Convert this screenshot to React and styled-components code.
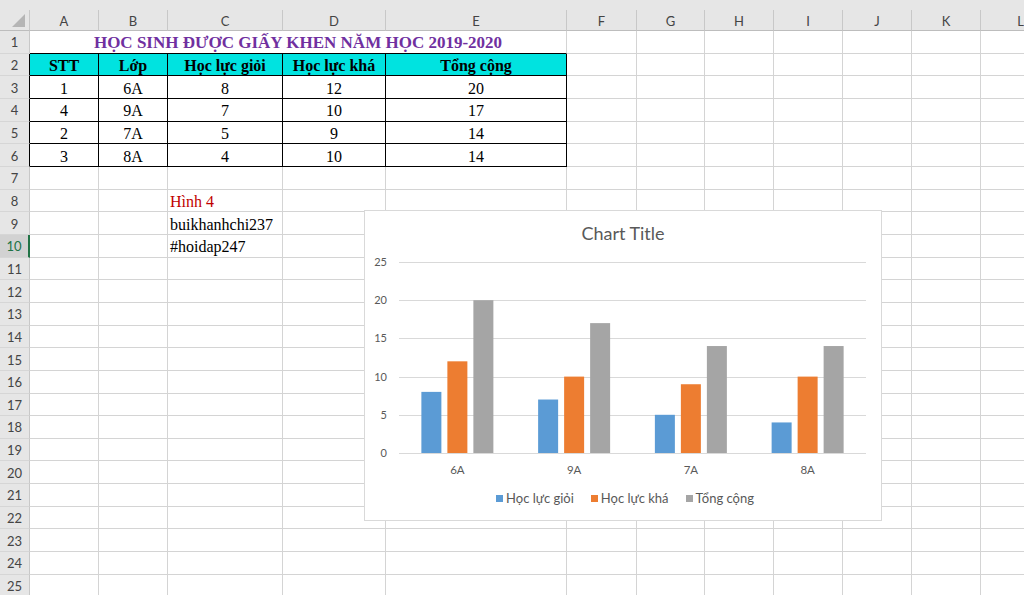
import React from "react";
import styled, { createGlobalStyle } from "styled-components";

const Global = createGlobalStyle`
  html, body { margin: 0; padding: 0; background: #fff; }
  body { width: 1024px; height: 595px; overflow: hidden; }
`;

const COLS = [
  { k: "A", w: 69 }, { k: "B", w: 69 }, { k: "C", w: 115 }, { k: "D", w: 103 },
  { k: "E", w: 181 }, { k: "F", w: 70 }, { k: "G", w: 68 }, { k: "H", w: 69 },
  { k: "I", w: 69 }, { k: "J", w: 69 }, { k: "K", w: 69 }, { k: "L", w: 80 },
];

const GRID = "#d4d4d4";
const HEAD_BG = "#e6e6e6";

const Page = styled.div`
  position: relative;
  width: 1024px;
  height: 595px;
  overflow: hidden;
  background: #fff;
`;

const TopBand = styled.div`
  height: 10px;
  background: ${HEAD_BG};
`;

const Sheet = styled.div`
  display: grid;
  grid-template-columns: 30px ${COLS.map((c) => c.w + "px").join(" ")};
  grid-template-rows: 21px;
  grid-auto-rows: 22.667px;
`;

const Corner = styled.div`
  background: ${HEAD_BG};
  border-right: 1px solid #c8c8c8;
  border-bottom: 1px solid #bdbdbd;
  box-sizing: border-box;
  display: flex;
  align-items: flex-end;
  justify-content: flex-end;
  padding: 0 4px 3px 0;
`;

const ColHead = styled.div`
  background: ${HEAD_BG};
  border-right: 1px solid #c8c8c8;
  border-bottom: 1px solid #bdbdbd;
  box-sizing: border-box;
  display: flex;
  align-items: center;
  justify-content: center;
  padding-top: 1px;
  font-family: Lato, "Liberation Sans", sans-serif;
  font-size: 13px;
  color: #444;
`;

const RowHead = styled.div`
  background: ${(p) => (p.$selected ? "#d2d2d2" : HEAD_BG)};
  border-right: ${(p) =>
    p.$selected ? "2px solid #217346" : p.$edge ? "1px solid #000" : "1px solid #c8c8c8"};
  border-bottom: 1px solid #d6d6d6;
  box-sizing: border-box;
  display: flex;
  align-items: center;
  justify-content: center;
  padding-top: 1px;
  font-family: Lato, "Liberation Sans", sans-serif;
  font-size: 13px;
  color: ${(p) => (p.$selected ? "#217346" : "#444")};
`;

const Cell = styled.div`
  grid-column: span ${(p) => p.$span || 1};
  box-sizing: border-box;
  border-right: 1px solid ${(p) => (p.$boxR ? "#000" : GRID)};
  border-bottom: 1px solid ${(p) => (p.$boxB ? "#000" : GRID)};
  background: ${(p) => p.$bg || "#fff"};
  display: flex;
  align-items: center;
  justify-content: ${(p) => (p.$left ? "flex-start" : "center")};
  padding-left: ${(p) => (p.$left ? "2px" : "0")};
  padding-top: 3px;
  white-space: nowrap;
  overflow: visible;
  font-family: "Liberation Serif", "Times New Roman", serif;
  font-size: ${(p) => (p.$title ? "17px" : "16px")};
  font-weight: ${(p) => (p.$bold ? 700 : 400)};
  color: ${(p) => p.$color || "#000"};
  position: relative;
  z-index: ${(p) => (p.$left ? 1 : 0)};
`;

const ChartBox = styled.div`
  position: absolute;
  left: 364px;
  top: 210px;
  width: 518px;
  height: 311px;
  box-sizing: border-box;
  background: #fff;
  border: 1px solid #d9d9d9;
  display: flex;
  flex-direction: column;
  align-items: center;
  z-index: 5;
`;

const ChartTitle = styled.div`
  margin-top: 10px;
  height: 24px;
  line-height: 24px;
  font-family: Lato, "Open Sans", sans-serif;
  font-size: 18px;
  color: #595959;
`;

const Plot = styled.svg`
  display: block;
  margin-left: -2px;
`;

const Legend = styled.div`
  margin-top: 10px;
  display: flex;
  gap: 17px;
  align-items: center;
  padding-left: 4px;
  font-family: Lato, "Open Sans", sans-serif;
  font-size: 13px;
  color: #595959;
  line-height: 16px;
`;

const LegendItem = styled.div`
  display: flex;
  align-items: center;
  gap: 3px;
`;

const Swatch = styled.span`
  width: 7px;
  height: 7px;
  background: ${(p) => p.$c};
  display: inline-block;
`;

const SERIES = [
  { name: "Học lực giỏi", color: "#5b9bd5" },
  { name: "Học lực khá", color: "#ed7d31" },
  { name: "Tổng cộng", color: "#a5a5a5" },
];

const ROWS = [
  ["1", "6A", "8", "12", "20"],
  ["4", "9A", "7", "10", "17"],
  ["2", "7A", "5", "9", "14"],
  ["3", "8A", "4", "10", "14"],
];
const HEADERS = ["STT", "Lớp", "Học lực giỏi", "Học lực khá", "Tổng cộng"];

function Chart() {
  const data = ROWS.map((r) => ({ cat: r[1], v: [+r[2], +r[3], +r[4]] }));
  const x0 = 36, x1 = 503, y0 = 208, step = 38.2;
  const catW = (x1 - x0) / 4;
  const unit = step / 5;
  return (
    <ChartBox>
      <ChartTitle>Chart Title</ChartTitle>
      <Plot width="518" height="235" viewBox="0 0 518 235">
        {[0, 1, 2, 3, 4, 5].map((i) => {
          const y = Math.round(y0 - i * step) + 0.5;
          return (
            <g key={i}>
              <line x1={x0} x2={x1} y1={y} y2={y} stroke="#d9d9d9" strokeWidth="1" />
              <text x="24" y={y} dy="0.35em" textAnchor="end" fontFamily="Lato, sans-serif" fontSize="11" fill="#595959">
                {i * 5}
              </text>
            </g>
          );
        })}
        {data.map((d, gi) => {
          const cx = x0 + catW * (gi + 0.5);
          return (
            <g key={d.cat}>
              {d.v.map((v, si) => {
                const h = v * unit;
                const bx = cx - 36 + si * 26;
                return <rect key={si} x={bx} y={y0 - h} width="20" height={h} fill={SERIES[si].color} />;
              })}
              <text x={cx} y="225" dy="0.35em" textAnchor="middle" fontFamily="Lato, sans-serif" fontSize="11.5" fill="#595959">
                {d.cat}
              </text>
            </g>
          );
        })}
      </Plot>
      <Legend>
        {SERIES.map((s) => (
          <LegendItem key={s.name}>
            <Swatch $c={s.color} />
            {s.name}
          </LegendItem>
        ))}
      </Legend>
    </ChartBox>
  );
}

function CornerMark() {
  return (
    <svg width="13" height="13" viewBox="0 0 13 13">
      <polygon points="13,0 13,13 0,13" fill="#b5b5b5" />
    </svg>
  );
}

export default function App() {
  const rows = [];
  for (let r = 1; r <= 26; r++) {
    const cells = [];
    const edge = r >= 2 && r <= 6;
    cells.push(
      <RowHead key="h" $edge={edge} $selected={r === 10}>
        {r}
      </RowHead>
    );
    if (r === 1) {
      cells.push(
        <Cell key="t" $span={5} $boxB $bold $title $color="#7030a0">
          HỌC SINH ĐƯỢC GIẤY KHEN NĂM HỌC 2019-2020
        </Cell>
      );
      COLS.slice(5).forEach((c) => cells.push(<Cell key={c.k} />));
    } else if (r === 2) {
      HEADERS.forEach((h, i) => cells.push(<Cell key={i} $boxR $boxB $bold $bg="#00e3e0">{h}</Cell>));
      COLS.slice(5).forEach((c) => cells.push(<Cell key={c.k} />));
    } else if (r >= 3 && r <= 6) {
      ROWS[r - 3].forEach((v, i) => cells.push(<Cell key={i} $boxR $boxB>{v}</Cell>));
      COLS.slice(5).forEach((c) => cells.push(<Cell key={c.k} />));
    } else {
      const text = { 8: "Hình 4", 9: "buikhanhchi237", 10: "#hoidap247" }[r];
      COLS.forEach((c) =>
        cells.push(
          c.k === "C" && text ? (
            <Cell key={c.k} $left $color={r === 8 ? "#c00000" : "#000"}>
              {text}
            </Cell>
          ) : (
            <Cell key={c.k} />
          )
        )
      );
    }
    rows.push(<React.Fragment key={r}>{cells}</React.Fragment>);
  }

  return (
    <Page>
      <Global />
      <TopBand />
      <Sheet>
        <Corner>
          <CornerMark />
        </Corner>
        {COLS.map((c) => (
          <ColHead key={c.k}>{c.k}</ColHead>
        ))}
        {rows}
      </Sheet>
      <Chart />
    </Page>
  );
}
